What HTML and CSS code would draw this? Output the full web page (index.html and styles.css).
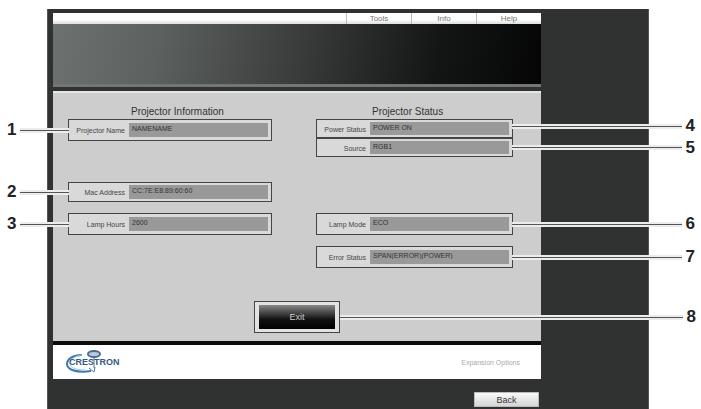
FILE: index.html
```
<!DOCTYPE html>
<html lang="en">
<head>
    <meta charset="UTF-8">
    <meta name="viewport" content="width=device-width, initial-scale=1.0">
    <title>Projector Information</title>
    <link rel="stylesheet" href="styles.css">
</head>
<body>
    <div class="frame">
        <div class="screen">
            <nav class="menu">
                <a href="#">Tools</a>
                <a href="#">Info</a>
                <a href="#">Help</a>
            </nav>
            <div class="banner"></div>

            <main class="panel">
                <div class="columns">
                    <section class="column info">
                        <h2>Projector Information</h2>
                        <div class="field tall">
                            <label for="name">Projector Name</label>
                            <input id="name" type="text" value="NAMENAME" readonly>
                            <span class="callout left">1</span>
                        </div>
                        <div class="field mac">
                            <label for="mac">Mac Address</label>
                            <input id="mac" type="text" value="CC:7E:E8:89:60:60" readonly>
                            <span class="callout left">2</span>
                        </div>
                        <div class="field tall lamp">
                            <label for="hours">Lamp Hours</label>
                            <input id="hours" type="text" value="2600" readonly>
                            <span class="callout left">3</span>
                        </div>
                    </section>

                    <section class="column status">
                        <h2>Projector Status</h2>
                        <div class="field">
                            <label for="power">Power Status</label>
                            <input id="power" type="text" value="POWER ON" readonly>
                            <span class="callout right raised">4</span>
                        </div>
                        <div class="field source">
                            <label for="source">Source</label>
                            <input id="source" type="text" value="RGB1" readonly>
                            <span class="callout right">5</span>
                        </div>
                        <div class="field tall mode">
                            <label for="mode">Lamp Mode</label>
                            <input id="mode" type="text" value="ECO" readonly>
                            <span class="callout right">6</span>
                        </div>
                        <div class="field tall error">
                            <label for="error">Error Status</label>
                            <input id="error" type="text" value="SPAN(ERROR)(POWER)" readonly>
                            <span class="callout right">7</span>
                        </div>
                    </section>
                </div>

                <div class="actions">
                    <div class="exit-box">
                        <button class="exit" type="button">Exit</button>
                    </div>
                    <span class="callout right from-exit">8</span>
                </div>
            </main>

            <footer class="footer">
                <svg class="logo" viewBox="0 0 56 26" role="img" aria-label="Crestron">
                    <ellipse cx="29" cy="5" rx="6" ry="3" fill="#b9cbdc" stroke="#4a6c92" stroke-width="2"/>
                    <path d="M17 6C8 6 2 10 2 15c0 6 10 9 24 7" fill="none" stroke="#3c78ad" stroke-width="2"/>
                    <path d="M17 6C10 7 5 10 5 15c0 4 7 6 15 6" fill="none" stroke="#9cc4e2" stroke-width="1"/>
                    <path d="M29 8v11M24 19l5 4 1-5" fill="none" stroke="#50779c" stroke-width="1"/>
                    <text class="logo-text" x="4" y="16">CRESTRON</text>
                </svg>
                <a class="options" href="#">Expansion Options</a>
            </footer>
        </div>

        <div class="bottom">
            <button class="back" type="button">Back</button>
        </div>
    </div>
</body>
</html>
```

FILE: styles.css
```
*{
    margin: 0;
    padding: 0;
    box-sizing: border-box;
}

body{
    font-family: "Liberation Sans", Arial, sans-serif;
    background: #fff;
    padding: 9px 52px 0 47px;
    overflow-x: hidden;
}

.frame{
    background: #303231;
    border-left: 1px solid #555;
    border-right: 1px solid #555;
    padding: 4px 107px 0 5px;
    min-height: calc(100vh - 9px);
}

/* top menu */
.menu{
    display: flex;
    justify-content: flex-end;
    height: 11px;
    background: linear-gradient(#fff 60%, #ddd);
}

.menu a{
    width: 65px;
    border-left: 1px solid #bbb;
    color: #777;
    font-size: 8px;
    line-height: 12px;
    text-align: center;
    text-decoration: none;
}

.banner{
    height: 63px;
    background: linear-gradient(100deg, #6d7270 0%, #5c605e 22%, #373a39 52%, #141616 78%, #050505 100%);
    border-bottom: 3px solid #747675;
}

/* main panel */
.panel{
    margin-top: 4px;
    background: #cdcdcd;
    border-top: 2px solid #e6e6e6;
    border-bottom: 4px solid #0c0c0c;
    padding: 11px 28px 8px 15px;
}

.columns{
    display: grid;
    grid-template-columns: 204fr 197fr;
    gap: 44px;
}

.column h2{
    height: 15px;
    color: #333;
    font-size: 10px;
    font-weight: 400;
    line-height: 15px;
}

.info h2{
    padding-left: 63px;
}

.status h2{
    padding-left: 56px;
}

.field{
    position: relative;
    display: flex;
    gap: 4px;
    height: 19px;
    border: 1px solid #444;
    background: #d9d9d9;
    padding: 2px 3px;
}

.tall{
    height: 22px;
    padding: 3px;
}

.field label{
    width: 53px;
    color: #444;
    font-size: 7px;
    line-height: 15px;
    text-align: right;
    white-space: nowrap;
}

.status label{
    width: 46px;
}

.field input{
    flex: 1;
    min-width: 0;
    border: 0;
    background: #999;
    color: #333;
    font-family: inherit;
    font-size: 7px;
    padding: 0 3px 3px;
}

.mac{
    height: 20px;
    margin-top: 41px;
}

.lamp{
    margin-top: 11px;
}

.mode{
    margin-top: 56px;
}

.error{
    margin-top: 11px;
}

/* numbered leader lines, drawn over the frame */
.callout{
    position: absolute;
    top: 50%;
    display: flex;
    align-items: center;
    gap: 4px;
    height: 18px;
    margin-top: -9px;
    color: #222;
    font-size: 17px;
    font-weight: 700;
    line-height: 18px;
}

.callout::before,
.callout::after{
    height: 5px;
    background: linear-gradient(#ececec 2px, #555 2px, #555 3px, #ececec 3px);
}

.left{
    right: 100%;
    width: 62px;
}

.left::after{
    content: "";
    flex: 1;
}

.right{
    left: 100%;
    width: 183px;
}

.right::before{
    content: "";
    flex: 1;
}

.raised{
    top: 6px;
}

.actions{
    position: relative;
    display: flex;
    justify-content: center;
    margin: 33px -28px 0 -15px;
}

.exit-box{
    width: 86px;
    height: 32px;
    border: 1px solid #444;
    background: #e2e2e2;
    padding: 3px 4px;
}

.exit{
    display: block;
    width: 100%;
    height: 100%;
    border: 0;
    background: linear-gradient(#888 0%, #555 25%, #111 60%, #000 100%);
    color: #ccc;
    font-family: inherit;
    font-size: 9px;
}

.from-exit{
    left: calc(50% + 43px);
    right: -155px;
    width: auto;
}

/* footer */
.footer{
    display: flex;
    justify-content: space-between;
    align-items: center;
    height: 34px;
    background: #fff;
    padding: 0 21px 0 12px;
}

.logo{
    width: 56px;
    height: 26px;
    overflow: visible;
}

.logo-text{
    fill: #35597f;
    font-size: 9px;
    font-weight: 700;
}

.options{
    color: #aaa;
    font-size: 7px;
    text-decoration: none;
}

.bottom{
    display: flex;
    justify-content: flex-end;
    padding: 13px 2px 2px;
}

.back{
    width: 65px;
    height: 15px;
    border: 1px solid #bbb;
    background: linear-gradient(#fafafa, #d5d5d5);
    color: #333;
    font-family: inherit;
    font-size: 9px;
}
```
